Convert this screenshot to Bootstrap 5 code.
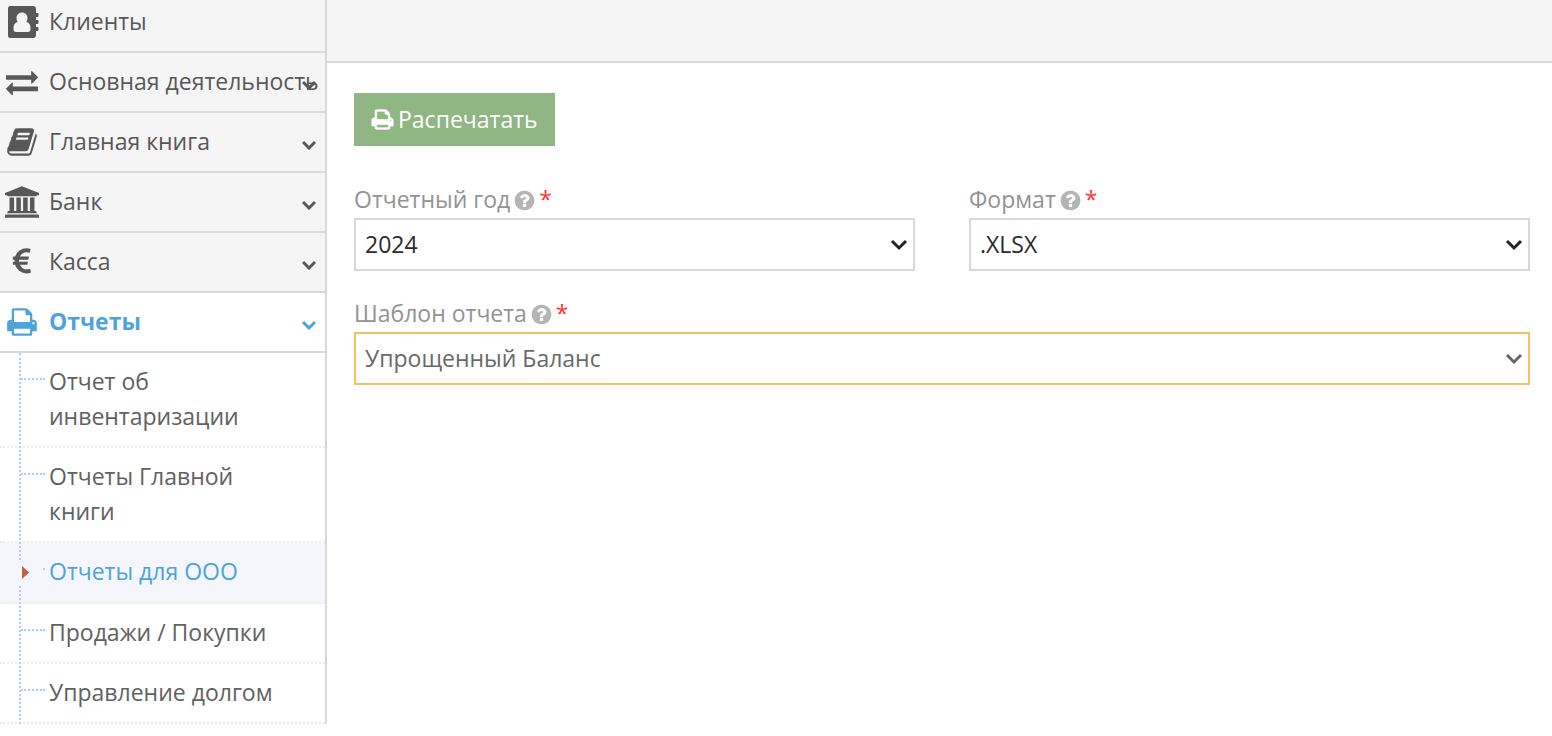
<!DOCTYPE html>
<html lang="ru">
<head>
<meta charset="utf-8">
<meta name="viewport" content="width=device-width, initial-scale=1">
<title>Отчеты для ООО</title>
<link rel="stylesheet" href="https://cdn.jsdelivr.net/npm/bootstrap@5.3.0/dist/css/bootstrap.min.css">
<style>
  body { font-family: "Open Sans", sans-serif; font-size: 23px; line-height: 35px; color: #585858; background: #fff; }

  /* Sidebar */
  .sidebar { width: 327px; border-right: 2px solid #d8d8d8; overflow: hidden; }
  .menu { margin-top: -7px; }
  .menu-link { height: 60px; padding: 0 9px 2px 5px; background: #f5f5f5; border-bottom: 2px solid #dadada; color: #585858; white-space: nowrap; text-decoration: none; }
  .menu-link svg.pict { width: 34px; height: 32px; margin: 2px 10px 0 0; flex: none; fill: currentColor; }
  .menu-link .caret { position: absolute; right: 9px; top: 27px; width: 14px; height: 10px; }
  .menu-link.current { background: #fff; color: #4fa3dd; font-weight: 700; }
  .caret { fill: none; stroke: currentColor; stroke-width: 3; }

  /* Submenu with its dotted tree */
  .tree { position: relative; }
  .tree::before { content: ""; position: absolute; z-index: 1; left: 19px; top: 0; bottom: 0; border-left: 2px dotted #a9cffa; }
  .tree-link { position: relative; display: block; padding: 11px 50px 12px 49px; border-bottom: 2px dotted #ececec; color: #616161; text-decoration: none; }
  .tree-link::before { content: ""; position: absolute; left: 21px; top: 25px; width: 24px; border-top: 2px dotted #a9cffa; }
  .tree-link.current { padding-bottom: 13px; background: #f4f6fb; color: #4fa3dd; }
  .tree-link.current::before { left: 43px; width: 2px; }
  .pointer { position: absolute; z-index: 2; left: 18px; top: 18px; width: 12px; height: 23px; background: #f4f6fb; fill: #c0603c; }

  /* Content */
  .topbar { height: 63px; background: #f5f5f5; border-bottom: 2px solid #dadada; }
  .content { padding: 30px 22px 30px 27px; }
  .btn-print { --bs-btn-color: #fff; --bs-btn-bg: #8fb683; --bs-btn-border-color: #8fb683; --bs-btn-hover-color: #fff; --bs-btn-hover-bg: #7da670; --bs-btn-font-size: 23px; --bs-btn-border-radius: 0; --bs-btn-padding-x: 16px; --bs-btn-padding-y: 8px; --bs-btn-line-height: 35px; }
  .btn-print svg { width: 23px; height: 23px; fill: currentColor; stroke: currentColor; stroke-width: 50; }
  .form-grid { --bs-gutter-x: 54px; --bs-gutter-y: 25px; margin-top: 11px; }
  .form-label { display: flex; align-items: center; gap: 3px; margin: 0 0 1px; font-size: 23px; line-height: 35px; color: #939393; }
  .form-label svg { width: 23px; height: 23px; margin-top: 2px; fill: #b5b5b5; }
  .req { color: #f33; }
  .pick { height: 53px; padding: 0 36px 0 9px; border: 2px solid #d8d8d8; border-radius: 0; font-size: 23px; line-height: 35px; color: #2b2b2b; background-position: right 5px center; background-size: 18px 12px;
    background-image: url("data:image/svg+xml,%3Csvg xmlns='http://www.w3.org/2000/svg' viewBox='0 0 18 12'%3E%3Cpath fill='none' stroke='%23222' stroke-width='3' d='M2 2l7 7 7-7'/%3E%3C/svg%3E"); }
  .pick.chosen { border-color: #f8bd65; color: #696969;
    background-image: url("data:image/svg+xml,%3Csvg xmlns='http://www.w3.org/2000/svg' viewBox='0 0 18 12'%3E%3Cpath fill='none' stroke='%23666' stroke-width='3' d='M2 2l7 7 7-7'/%3E%3C/svg%3E"); }
</style>
</head>
<body>
<svg class="d-none" xmlns="http://www.w3.org/2000/svg">
  <symbol id="i-print" viewBox="0 0 1792 1792"><path d="M448 1536h896v-256h-896v256zm0-640h896v-384h-160q-40 0-68-28t-28-68v-160h-640v640zm1152 64q0-26-19-45t-45-19-45 19-19 45 19 45 45 19 45-19 19-45zm128 0v416q0 13-9.5 22.5t-22.5 9.5h-224v160q0 40-28 68t-68 28h-960q-40 0-68-28t-28-68v-160h-224q-13 0-22.5-9.5t-9.5-22.5v-416q0-79 56.5-135.5t135.5-56.5h64v-544q0-40 28-68t68-28h672q40 0 88 20t76 48l152 152q28 28 48 76t20 88v256h64q79 0 135.5 56.5t56.5 135.5z"/></symbol>
  <symbol id="i-help" viewBox="0 0 1792 1792"><path d="M1024 1376v-192q0-14-9-23t-23-9h-192q-14 0-23 9t-9 23v192q0 14 9 23t23 9h192q14 0 23-9t9-23zm256-672q0-88-55.5-163t-138.5-116-170-41q-243 0-371 213-15 24 8 42l132 100q7 6 19 6 16 0 25-12 53-68 86-92 34-24 86-24 48 0 85.5 26t37.5 59q0 38-20 61t-68 45q-63 28-115.5 86.5t-52.5 125.5v36q0 14 9 23t23 9h192q14 0 23-9t9-23q0-19 21.5-49.5t54.5-49.5q32-18 49-28.5t46-35 44.5-48 28-60.5 12.5-81zm384 192q0 209-103 385.5t-279.5 279.5-385.5 103-385.5-103-279.5-279.5-103-385.5 103-385.5 279.5-279.5 385.5-103 385.5 103 279.5 279.5 103 385.5z"/></symbol>
</svg>

<div class="d-flex align-items-start">
  <nav class="sidebar flex-shrink-0" aria-label="Главное меню">
    <ul class="menu list-unstyled mb-0">
      <li><a class="menu-link d-flex align-items-center position-relative" href="#">
        <svg class="pict" viewBox="0 0 34 32"><path fill-rule="evenodd" d="M5 0h23q3 0 3 3v4h1.500q1 0 1 1v2q0 1-1 1H31v3h1.500q1 0 1 1v2q0 1-1 1H31v3h1.500q1 0 1 1v2q0 1-1 1H31v4q0 3-3 3H5q-2 0-2-3V3q0-3 2-3zm12 6.500c-3.500 0-5.500 2.500-5.500 5.500 0 1.800.5 3 1.300 4C9.500 16.500 8.500 19 8.500 23c0 2 1 3 2.500 3h12c1.500 0 2.500-1 2.500-3 0-4-1-6.500-4.300-7 .8-1 1.300-2.200 1.300-4 0-3-2-5.500-5.500-5.500z"/></svg>
        Клиенты</a></li>
      <li><a class="menu-link d-flex align-items-center position-relative" href="#">
        <svg class="pict" viewBox="0 0 1792 1792"><path d="M1792 1184v192q0 13-9.500 22.500t-22.500 9.500h-1376v192q0 13-9.500 22.500t-22.500 9.500q-12 0-24-10l-319-320q-9-9-9-22 0-14 9-23l320-320q9-9 23-9 13 0 22.500 9.500t9.500 22.500v192h1376q13 0 22.500 9.500t9.500 22.500zm0-544q0 14-9 23l-320 320q-9 9-23 9-13 0-22.500-9.500t-9.500-22.500v-192h-1376q-13 0-22.500-9.500t-9.500-22.500v-192q0-13 9.500-22.500t22.500-9.500h1376v-192q0-14 9-23t23-9q12 0 24 10l319 319q9 9 9 23z"/></svg>
        Основная деятельность<svg class="caret" viewBox="0 0 14 10"><path d="M1 2l6 6 6-6"/></svg></a></li>
      <li><a class="menu-link d-flex align-items-center position-relative" href="#">
        <svg class="pict" viewBox="0 0 1792 1792"><path d="M1703 478q40 57 18 129l-275 906q-19 64-76.500 107.500t-122.500 43.500h-923q-77 0-148.500-53.500t-99.500-131.500q-24-67-2-127 0-4 3-27t4-37q1-8-3-21.500t-3-19.500q2-11 8-21t16.500-23.500 16.500-23.500q23-38 45-91.500t30-91.500q3-10 .5-30t-.5-28q3-11 17-28t17-23q21-36 42-92t25-90q1-9-2.500-32t.5-28q4-13 22-30.500t22-22.500q19-26 42.500-84.500t27.500-96.500q1-8-3-25.500t-2-26.500q2-8 9-18t18-23 17-21q8-12 16.500-30.500t15-35 16-36 19.500-32 26.500-23.500 36-11.500 47.500 5.500l-1 3q38-9 51-9h761q74 0 114 56t18 130l-274 906q-36 119-71.500 153.500t-128.500 34.500h-869q-27 0-38 15-11 16-1 43 24 70 144 70h923q29 0 56-15.500t35-41.500l300-987q7-22 5-57 38 15 59 43zm-1064 2q-4 13 2 22.500t20 9.500h608q13 0 25.500-9.500t16.500-22.500l21-64q4-13-2-22.500t-20-9.500h-608q-13 0-25.500 9.500t-16.500 22.500zm-83 256q-4 13 2 22.500t20 9.500h608q13 0 25.500-9.500t16.500-22.500l21-64q4-13-2-22.500t-20-9.500h-608q-13 0-25.500 9.500t-16.500 22.500z"/></svg>
        Главная книга<svg class="caret" viewBox="0 0 14 10"><path d="M1 2l6 6 6-6"/></svg></a></li>
      <li><a class="menu-link d-flex align-items-center position-relative" href="#">
        <svg class="pict" viewBox="0 0 1920 1792"><path d="M960 0l960 384v128h-128q0 26-20.500 45t-48.500 19h-1526q-28 0-48.500-19t-20.500-45h-128v-128zm-704 640h256v768h128v-768h256v768h128v-768h256v768h128v-768h256v768h59q28 0 48.500 19t20.500 45v64h-1664v-64q0-26 20.500-45t48.500-19h59v-768zm1595 960q28 0 48.500 19t20.500 45v128h-1920v-128q0-26 20.500-45t48.500-19h1782z"/></svg>
        Банк<svg class="caret" viewBox="0 0 14 10"><path d="M1 2l6 6 6-6"/></svg></a></li>
      <li><a class="menu-link d-flex align-items-center position-relative" href="#">
        <svg class="pict" viewBox="0 0 1792 1792"><path d="M1360 1307l35 159q3 12-3 22.500t-17 14.500l-5 1q-4 2-10.500 3.500t-16 4.500-21.500 5.500-25.500 5-30 5-33.500 4.500-36.500 3-38.500 1q-234 0-409-130.500t-238-351.500h-95q-13 0-22.500-9.500t-9.500-22.500v-113q0-13 9.500-22.500t22.500-9.500h66q-2-57 1-105h-67q-14 0-23-9t-9-23v-114q0-14 9-23t23-9h98q67-210 243.500-338t400.500-128q102 0 194 23 11 3 20 15 6 11 3 24l-43 159q-3 13-14 19.500t-24 2.500l-4-1q-4-1-11.500-2.500l-17.500-3.500-22.500-3.500-26-3-29-2.500-29.500-1q-126 0-226 64t-150 176h468q16 0 25 12 10 12 7 26l-24 114q-5 26-32 26h-488q-3 37 0 105h459q15 0 25 12 9 12 6 27l-24 112q-2 11-11 18.500t-20 7.500h-387q48 117 149.500 185.500t228.500 68.500q18 0 36-1.500t33.500-3.500 29.500-4.500 24.500-5 18.500-4.500l12-3 5-2q13-5 26 2 12 7 15 21z"/></svg>
        Касса<svg class="caret" viewBox="0 0 14 10"><path d="M1 2l6 6 6-6"/></svg></a></li>
      <li><a class="menu-link current d-flex align-items-center position-relative" href="#">
        <svg class="pict"><use href="#i-print"/></svg>
        Отчеты<svg class="caret" viewBox="0 0 14 10"><path d="M1 2l6 6 6-6"/></svg></a>
        <ul class="tree list-unstyled">
          <li><a class="tree-link" href="#">Отчет об инвентаризации</a></li>
          <li><a class="tree-link" href="#">Отчеты Главной книги</a></li>
          <li><a class="tree-link current" href="#" aria-current="page"><svg class="pointer" viewBox="0 0 12 23"><path d="M4 5l7 6.500-7 6.500z"/></svg>Отчеты для ООО</a></li>
          <li><a class="tree-link" href="#">Продажи / Покупки</a></li>
          <li><a class="tree-link" href="#">Управление долгом</a></li>
        </ul>
      </li>
    </ul>
  </nav>

  <div class="flex-grow-1">
    <header class="topbar"></header>
    <main class="content">
      <button type="button" class="btn btn-print d-inline-flex align-items-center gap-1"><svg><use href="#i-print"/></svg>Распечатать</button>
      <form class="row form-grid">
        <div class="col-6">
          <label class="form-label" for="year">Отчетный год <svg><use href="#i-help"/></svg> <span class="req">*</span></label>
          <select class="form-select pick" id="year"><option>2024</option></select>
        </div>
        <div class="col-6">
          <label class="form-label" for="format">Формат <svg><use href="#i-help"/></svg> <span class="req">*</span></label>
          <select class="form-select pick" id="format"><option>.XLSX</option></select>
        </div>
        <div class="col-12">
          <label class="form-label" for="template">Шаблон отчета <svg><use href="#i-help"/></svg> <span class="req">*</span></label>
          <select class="form-select pick chosen" id="template"><option>Упрощенный Баланс</option></select>
        </div>
      </form>
    </main>
  </div>
</div>
<script src="https://cdn.jsdelivr.net/npm/bootstrap@5.3.0/dist/js/bootstrap.bundle.min.js"></script>
</body>
</html>
